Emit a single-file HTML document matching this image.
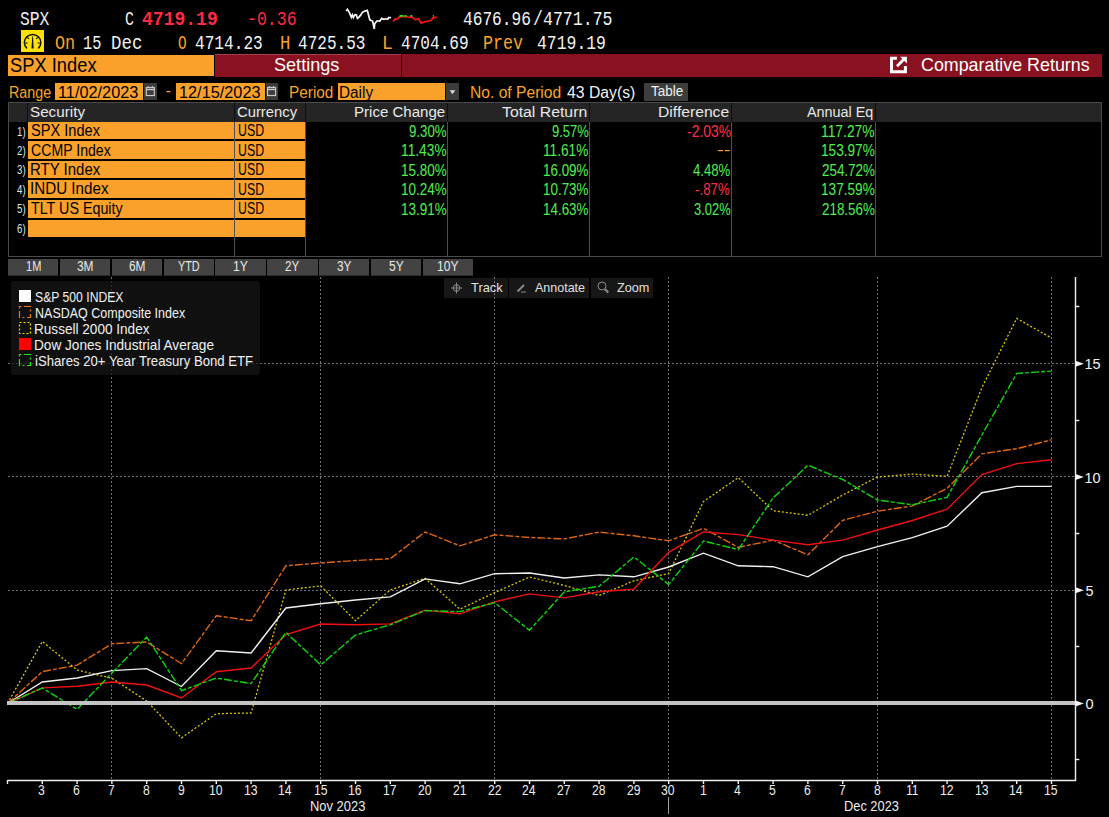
<!DOCTYPE html>
<html><head><meta charset="utf-8"><style>
*{margin:0;padding:0;box-sizing:border-box}
html,body{width:1109px;height:817px;background:#000;overflow:hidden}
body{position:relative;font-family:'Liberation Sans',sans-serif}
.t{position:absolute;line-height:1;white-space:pre}
.b{position:absolute}
.ch{position:absolute;left:0;top:0}
</style></head><body>
<div class="b" style="left:21.00px;top:30.00px;width:23.00px;height:22.00px;background:#ffe100;"></div>
<svg class="ch" width="60" height="60"><path d="M26.8,48.4 A8.2,8.2 0 1 1 38.4,48.4" fill="none" stroke="#111" stroke-width="1.5"/><g stroke="#111" stroke-width="1.1"><line x1="25.5" y1="43" x2="27.6" y2="43"/><line x1="37.6" y1="43" x2="39.7" y2="43"/><line x1="27.3" y1="37.3" x2="28.9" y2="38.9"/><line x1="37.9" y1="37.3" x2="36.3" y2="38.9"/></g><polygon points="32.2,36.4 33,36.4 33.7,48.4 31.5,48.4" fill="#111"/></svg>
<div class="b" style="left:8.00px;top:55.00px;width:205.50px;height:21.00px;background:#f9a12b;"></div>
<div class="b" style="left:215.00px;top:54.00px;width:185.50px;height:23.00px;background:#8a1120;border-top:1px solid #a3404f;"></div>
<div class="b" style="left:402.00px;top:54.00px;width:699.70px;height:23.00px;background:#8a1120;"></div>
<svg class="ch" width="1109" height="100"><path d="M896.9,58.3 H891.5 V71.7 H905.4 V66" fill="none" stroke="#fff" stroke-width="3"/><polygon points="900.2,56.8 906.9,56.8 906.9,63.5" fill="#fff"/><line x1="897" y1="66.2" x2="904.6" y2="58.6" stroke="#fff" stroke-width="2.8"/></svg>
<div class="b" style="left:54.60px;top:83.00px;width:88.30px;height:17.00px;background:#f9a12b;"></div>
<div class="b" style="left:143.90px;top:83.00px;width:12.90px;height:17.00px;background:#3b3b3b;"></div>
<div class="b" style="left:176.00px;top:83.00px;width:88.50px;height:17.00px;background:#f9a12b;"></div>
<div class="b" style="left:265.50px;top:83.00px;width:12.30px;height:17.00px;background:#3b3b3b;"></div>
<div class="b" style="left:337.70px;top:83.00px;width:107.40px;height:17.00px;background:#f9a12b;"></div>
<div class="b" style="left:446.00px;top:83.00px;width:12.80px;height:17.00px;background:#3b3b3b;"></div>
<div class="b" style="left:643.60px;top:83.00px;width:44.10px;height:17.50px;background:#3d3d3d;"></div>
<svg class="ch" width="1109" height="110"><rect x="146.3" y="87.5" width="8" height="8" fill="none" stroke="#c8c8c8" stroke-width="1.2"/><line x1="146.3" y1="89.5" x2="154.3" y2="89.5" stroke="#c8c8c8" stroke-width="1.4"/><line x1="148.3" y1="86" x2="148.3" y2="88" stroke="#c8c8c8" stroke-width="1"/><line x1="152.3" y1="86" x2="152.3" y2="88" stroke="#c8c8c8" stroke-width="1"/><rect x="267.6" y="87.5" width="8" height="8" fill="none" stroke="#c8c8c8" stroke-width="1.2"/><line x1="267.6" y1="89.5" x2="275.6" y2="89.5" stroke="#c8c8c8" stroke-width="1.4"/><line x1="269.6" y1="86" x2="269.6" y2="88" stroke="#c8c8c8" stroke-width="1"/><line x1="273.6" y1="86" x2="273.6" y2="88" stroke="#c8c8c8" stroke-width="1"/><polygon points="449.7,90.2 455.3,90.2 452.5,94.2" fill="#d8d8d8"/></svg>
<div class="b" style="left:7.50px;top:102.00px;width:1094.50px;height:155.00px;background:#000;border:1px solid #4a4a4a;"></div>
<div class="b" style="left:8.50px;top:103.00px;width:1092.50px;height:18.50px;background:#252525;"></div>
<div class="b" style="left:28.00px;top:121.80px;width:206.00px;height:17.60px;background:#f9a12b;"></div>
<div class="b" style="left:235.00px;top:121.80px;width:70.00px;height:17.60px;background:#f9a12b;"></div>
<div class="b" style="left:28.00px;top:141.35px;width:206.00px;height:17.60px;background:#f9a12b;"></div>
<div class="b" style="left:235.00px;top:141.35px;width:70.00px;height:17.60px;background:#f9a12b;"></div>
<div class="b" style="left:28.00px;top:160.90px;width:206.00px;height:17.60px;background:#f9a12b;"></div>
<div class="b" style="left:235.00px;top:160.90px;width:70.00px;height:17.60px;background:#f9a12b;"></div>
<div class="b" style="left:28.00px;top:180.45px;width:206.00px;height:17.60px;background:#f9a12b;"></div>
<div class="b" style="left:235.00px;top:180.45px;width:70.00px;height:17.60px;background:#f9a12b;"></div>
<div class="b" style="left:28.00px;top:200.00px;width:206.00px;height:17.60px;background:#f9a12b;"></div>
<div class="b" style="left:235.00px;top:200.00px;width:70.00px;height:17.60px;background:#f9a12b;"></div>
<div class="b" style="left:28.00px;top:219.55px;width:206.00px;height:17.60px;background:#f9a12b;"></div>
<div class="b" style="left:235.00px;top:219.55px;width:70.00px;height:17.60px;background:#f9a12b;"></div>
<div class="b" style="left:234.00px;top:122.00px;width:1.00px;height:135.00px;background:#505050;"></div>
<div class="b" style="left:234.00px;top:103.00px;width:1.00px;height:19.00px;background:#0e0e0e;"></div>
<div class="b" style="left:305.00px;top:122.00px;width:1.00px;height:135.00px;background:#505050;"></div>
<div class="b" style="left:305.00px;top:103.00px;width:1.00px;height:19.00px;background:#0e0e0e;"></div>
<div class="b" style="left:447.00px;top:122.00px;width:1.00px;height:135.00px;background:#505050;"></div>
<div class="b" style="left:447.00px;top:103.00px;width:1.00px;height:19.00px;background:#0e0e0e;"></div>
<div class="b" style="left:589.00px;top:122.00px;width:1.00px;height:135.00px;background:#505050;"></div>
<div class="b" style="left:589.00px;top:103.00px;width:1.00px;height:19.00px;background:#0e0e0e;"></div>
<div class="b" style="left:731.00px;top:122.00px;width:1.00px;height:135.00px;background:#505050;"></div>
<div class="b" style="left:731.00px;top:103.00px;width:1.00px;height:19.00px;background:#0e0e0e;"></div>
<div class="b" style="left:875.00px;top:122.00px;width:1.00px;height:135.00px;background:#505050;"></div>
<div class="b" style="left:875.00px;top:103.00px;width:1.00px;height:19.00px;background:#0e0e0e;"></div>
<div class="b" style="left:27.00px;top:103.00px;width:1.00px;height:19.00px;background:#0e0e0e;"></div>
<div class="b" style="left:8.00px;top:258.80px;width:50.30px;height:17.00px;background:#434343;border-bottom:1px solid #2c2c2c;"></div>
<div class="b" style="left:59.85px;top:258.80px;width:50.30px;height:17.00px;background:#434343;border-bottom:1px solid #2c2c2c;"></div>
<div class="b" style="left:111.70px;top:258.80px;width:50.30px;height:17.00px;background:#434343;border-bottom:1px solid #2c2c2c;"></div>
<div class="b" style="left:163.55px;top:258.80px;width:50.30px;height:17.00px;background:#434343;border-bottom:1px solid #2c2c2c;"></div>
<div class="b" style="left:215.40px;top:258.80px;width:50.30px;height:17.00px;background:#434343;border-bottom:1px solid #2c2c2c;"></div>
<div class="b" style="left:267.25px;top:258.80px;width:50.30px;height:17.00px;background:#434343;border-bottom:1px solid #2c2c2c;"></div>
<div class="b" style="left:319.10px;top:258.80px;width:50.30px;height:17.00px;background:#434343;border-bottom:1px solid #2c2c2c;"></div>
<div class="b" style="left:370.95px;top:258.80px;width:50.30px;height:17.00px;background:#434343;border-bottom:1px solid #2c2c2c;"></div>
<div class="b" style="left:422.80px;top:258.80px;width:50.30px;height:17.00px;background:#434343;border-bottom:1px solid #2c2c2c;"></div>
<div class="b" style="left:444.00px;top:278.00px;width:63.50px;height:20.00px;background:#171717;"></div>
<div class="b" style="left:509.00px;top:278.00px;width:79.80px;height:20.00px;background:#171717;"></div>
<div class="b" style="left:590.80px;top:278.00px;width:62.50px;height:20.00px;background:#171717;"></div>
<svg class="ch" width="1109" height="300"><g stroke="#8a8a8a" stroke-width="1" fill="none"><circle cx="456.5" cy="288" r="3.3"/><line x1="451" y1="288" x2="462" y2="288"/><line x1="456.5" y1="282.5" x2="456.5" y2="293.5"/><line x1="517.5" y1="291.5" x2="524" y2="285" stroke-width="2"/><line x1="521" y1="292" x2="526" y2="292"/><circle cx="602" cy="286" r="4"/><line x1="605" y1="289.2" x2="608.3" y2="292.5" stroke-width="2.2"/></g></svg>
<svg class="ch" width="1109" height="60"><polyline points="346.2,11.1 347.4,9.4 348.9,11.9 349.9,13.9 351.4,17.4 352.4,14.9 353.4,17.4 354.9,14.7 356.4,14.9 357.4,18.4 358.8,17.4 360.8,14.9 362.3,12.4 364.8,11.1 367.3,10.4 369.8,19.8 372.7,21.3 374.2,28.8 374.7,23.8 376.7,21.3 377.7,20.8 379.7,21.3 381.7,18.4 383.7,19.3 385.6,18.8 387.6,19.3 388.6,17.7 391.1,17.7" fill="none" stroke="#f4f4f4" stroke-width="1.7"/><polyline points="393.1,21.3 395.6,18.8 397.0,19.3 399.5,16.9 404.5,16.4 409.4,17.4 412.4,17.1 415.4,19.8 418.4,18.8 421.3,23.3 424.3,21.8 427.3,21.3 431.3,20.3 432.8,17.9 434.2,17.4 436.7,17.4" fill="none" stroke="#ff1010" stroke-width="1.7"/><line x1="399.5" y1="15.9" x2="403.5" y2="15.9" stroke="#20e020" stroke-width="1.8"/><line x1="404.5" y1="15.9" x2="406.5" y2="15.9" stroke="#20e020" stroke-width="1.8"/><line x1="410.4" y1="15.9" x2="412.4" y2="15.9" stroke="#20e020" stroke-width="1.8"/><line x1="432.8" y1="15.9" x2="433.8" y2="15.9" stroke="#20e020" stroke-width="1.8"/></svg>
<svg class="ch" width="1109" height="817" viewBox="0 0 1109 817">
<g stroke="#707070" stroke-width="1" stroke-dasharray="2 2" fill="none"><line x1="111.5" y1="277" x2="111.5" y2="780"/><line x1="320.5" y1="277" x2="320.5" y2="780"/><line x1="494.5" y1="277" x2="494.5" y2="780"/><line x1="668.5" y1="277" x2="668.5" y2="780"/><line x1="877.5" y1="277" x2="877.5" y2="780"/><line x1="1051.5" y1="277" x2="1051.5" y2="780"/><line x1="8" y1="363.5" x2="1075" y2="363.5"/><line x1="8" y1="476.5" x2="1075" y2="476.5"/><line x1="8" y1="590.5" x2="1075" y2="590.5"/></g>
<polyline points="7.5,703.5 42.3,671.6 77.1,665.2 111.9,643.7 146.7,642.0 181.5,663.6 216.3,615.7 251.1,620.8 285.9,565.7 320.7,563.0 355.5,560.5 390.3,558.7 425.1,532.0 459.9,545.8 494.7,534.8 529.5,537.5 564.3,538.9 599.1,532.1 633.9,535.8 668.7,540.8 703.5,528.3 738.3,547.4 773.1,540.1 807.9,554.8 842.7,520.3 877.5,511.2 912.3,505.9 947.1,488.3 981.9,453.8 1016.7,448.7 1051.5,439.8" fill="none" stroke="#e2670e" stroke-width="1.4" stroke-dasharray="8 2 4 2"/>
<polyline points="7.5,703.5 42.3,641.5 77.1,670.0 111.9,678.3 146.7,701.0 181.5,737.8 216.3,713.7 251.1,713.0 285.9,590.0 320.7,585.9 355.5,620.7 390.3,589.9 425.1,578.3 459.9,609.2 494.7,592.6 529.5,577.0 564.3,585.4 599.1,595.5 633.9,580.8 668.7,573.5 703.5,501.5 738.3,477.6 773.1,510.7 807.9,515.3 842.7,495.1 877.5,477.0 912.3,474.1 947.1,476.3 981.9,387.5 1016.7,318.4 1051.5,338.0" fill="none" stroke="#dcc800" stroke-width="1.3" stroke-dasharray="2 2"/>
<polyline points="7.5,703.5 42.3,682.0 77.1,678.0 111.9,670.6 146.7,668.6 181.5,686.5 216.3,650.7 251.1,653.0 285.9,608.0 320.7,603.7 355.5,600.0 390.3,596.9 425.1,578.9 459.9,583.8 494.7,573.7 529.5,573.0 564.3,578.0 599.1,574.9 633.9,576.8 668.7,567.0 703.5,553.2 738.3,565.8 773.1,566.7 807.9,576.8 842.7,556.6 877.5,546.6 912.3,537.6 947.1,526.2 981.9,492.7 1016.7,486.4 1051.5,486.4" fill="none" stroke="#f0f0f0" stroke-width="1.4"/>
<polyline points="7.5,703.5 42.3,687.9 77.1,686.2 111.9,682.0 146.7,685.0 181.5,698.0 216.3,671.7 251.1,668.0 285.9,634.6 320.7,624.0 355.5,624.8 390.3,623.9 425.1,610.1 459.9,613.8 494.7,601.8 529.5,593.9 564.3,597.9 599.1,591.8 633.9,589.1 668.7,552.3 703.5,532.0 738.3,534.6 773.1,540.1 807.9,544.7 842.7,540.1 877.5,530.0 912.3,520.5 947.1,509.2 981.9,474.6 1016.7,463.6 1051.5,459.8" fill="none" stroke="#f01010" stroke-width="1.4"/>
<polyline points="7.5,703.5 42.3,688.0 77.1,709.4 111.9,673.0 146.7,637.0 181.5,690.6 216.3,678.1 251.1,683.6 285.9,632.4 320.7,664.9 355.5,635.0 390.3,624.8 425.1,610.6 459.9,611.6 494.7,602.7 529.5,630.3 564.3,591.8 599.1,586.3 633.9,556.9 668.7,584.5 703.5,541.0 738.3,549.6 773.1,497.9 807.9,465.2 842.7,479.5 877.5,500.0 912.3,504.8 947.1,497.4 981.9,435.0 1016.7,373.4 1051.5,371.1" fill="none" stroke="#0ad80a" stroke-width="1.4" stroke-dasharray="8 2 4 2"/>
<rect x="7" y="701" width="1069" height="4" fill="#c4c4c4"/>
<g stroke="#f0f0f0" stroke-width="1.4" fill="none">
<line x1="1075.5" y1="277" x2="1075.5" y2="781"/>
<line x1="7.5" y1="780.5" x2="1076" y2="780.5"/>
<line x1="7.5" y1="780" x2="7.5" y2="784"/>
<line x1="42.3" y1="780" x2="42.3" y2="784"/>
<line x1="77.1" y1="780" x2="77.1" y2="784"/>
<line x1="111.9" y1="780" x2="111.9" y2="784"/>
<line x1="146.7" y1="780" x2="146.7" y2="784"/>
<line x1="181.5" y1="780" x2="181.5" y2="784"/>
<line x1="216.3" y1="780" x2="216.3" y2="784"/>
<line x1="251.1" y1="780" x2="251.1" y2="784"/>
<line x1="285.9" y1="780" x2="285.9" y2="784"/>
<line x1="320.7" y1="780" x2="320.7" y2="784"/>
<line x1="355.5" y1="780" x2="355.5" y2="784"/>
<line x1="390.3" y1="780" x2="390.3" y2="784"/>
<line x1="425.1" y1="780" x2="425.1" y2="784"/>
<line x1="459.9" y1="780" x2="459.9" y2="784"/>
<line x1="494.7" y1="780" x2="494.7" y2="784"/>
<line x1="529.5" y1="780" x2="529.5" y2="784"/>
<line x1="564.3" y1="780" x2="564.3" y2="784"/>
<line x1="599.1" y1="780" x2="599.1" y2="784"/>
<line x1="633.9" y1="780" x2="633.9" y2="784"/>
<line x1="668.7" y1="780" x2="668.7" y2="784"/>
<line x1="703.5" y1="780" x2="703.5" y2="784"/>
<line x1="738.3" y1="780" x2="738.3" y2="784"/>
<line x1="773.1" y1="780" x2="773.1" y2="784"/>
<line x1="807.9" y1="780" x2="807.9" y2="784"/>
<line x1="842.7" y1="780" x2="842.7" y2="784"/>
<line x1="877.5" y1="780" x2="877.5" y2="784"/>
<line x1="912.3" y1="780" x2="912.3" y2="784"/>
<line x1="947.1" y1="780" x2="947.1" y2="784"/>
<line x1="981.9" y1="780" x2="981.9" y2="784"/>
<line x1="1016.7" y1="780" x2="1016.7" y2="784"/>
<line x1="1051.5" y1="780" x2="1051.5" y2="784"/>
<line x1="1075.5" y1="306.5" x2="1079.3" y2="306.5"/>
<line x1="1075.5" y1="420.5" x2="1079.3" y2="420.5"/>
<line x1="1075.5" y1="533.5" x2="1079.3" y2="533.5"/>
<line x1="1075.5" y1="646.5" x2="1079.3" y2="646.5"/>
<line x1="1075.5" y1="759.5" x2="1079.3" y2="759.5"/>
</g>
<polygon points="1075.5,360.8 1083.8,363.8 1075.5,366.8" fill="#f4f4f4"/>
<polygon points="1075.5,474.1 1083.8,477.1 1075.5,480.1" fill="#f4f4f4"/>
<polygon points="1075.5,587.3 1083.8,590.3 1075.5,593.3" fill="#f4f4f4"/>
<polygon points="1075.5,700.5 1083.8,703.5 1075.5,706.5" fill="#f4f4f4"/>
<line x1="668.5" y1="797" x2="668.5" y2="814" stroke="#a0a0a0" stroke-width="1"/>
</svg>
<div class="b" style="left:11.30px;top:280.80px;width:248.40px;height:93.80px;background:rgba(22,22,22,0.72);border-radius:3px;"></div>
<svg class="ch" width="300" height="400"><rect x="19" y="290" width="12" height="12" fill="#fff"/><rect x="19.5" y="306.5" width="11" height="11" fill="none" stroke="#f07418" stroke-width="1.2" stroke-dasharray="2 2.5 7 2.5"/><rect x="19.5" y="322.5" width="11" height="11" fill="none" stroke="#f0e000" stroke-width="1.2" stroke-dasharray="2 2"/><rect x="19" y="338" width="12" height="12" fill="#ff0000"/><rect x="19.5" y="354.5" width="11" height="11" fill="none" stroke="#10f010" stroke-width="1.2" stroke-dasharray="2 2.5 7 2.5"/></svg>
<div class="t" style="left:20.10px;top:10.30px;font-family:'Liberation Mono', monospace;font-size:20.3px;color:#f2f2f2;transform:scaleX(0.8029);transform-origin:0 0;">SPX</div>
<div class="t" style="left:125.16px;top:10.30px;font-family:'Liberation Mono', monospace;font-size:20.3px;color:#f2f2f2;transform:scaleX(0.7364);transform-origin:0 0;">C</div>
<div class="t" style="left:142.30px;top:10.30px;font-family:'Liberation Mono', monospace;font-size:20.3px;color:#ff2a44;font-weight:bold;transform:scaleX(0.8893);transform-origin:0 0;">4719.19</div>
<div class="t" style="left:246.55px;top:10.30px;font-family:'Liberation Mono', monospace;font-size:20.3px;color:#ff2a44;transform:scaleX(0.8158);transform-origin:0 0;">-0.36</div>
<div class="t" style="left:463.40px;top:10.30px;font-family:'Liberation Mono', monospace;font-size:20.3px;color:#f2f2f2;transform:scaleX(0.7976);transform-origin:0 0;">4676.96</div>
<div class="t" style="left:533.18px;top:10.30px;font-family:'Liberation Mono', monospace;font-size:20.3px;color:#f2f2f2;transform:scaleX(0.8167);transform-origin:0 0;">/4771.75</div>
<div class="t" style="left:54.50px;top:33.50px;font-family:'Liberation Mono', monospace;font-size:20.3px;color:#fca32a;transform:scaleX(0.8304);transform-origin:0 0;">On</div>
<div class="t" style="left:82.95px;top:33.50px;font-family:'Liberation Mono', monospace;font-size:20.3px;color:#f2f2f2;transform:scaleX(0.7522);transform-origin:0 0;">15</div>
<div class="t" style="left:110.64px;top:33.50px;font-family:'Liberation Mono', monospace;font-size:20.3px;color:#f2f2f2;transform:scaleX(0.8588);transform-origin:0 0;">Dec</div>
<div class="t" style="left:177.50px;top:33.50px;font-family:'Liberation Mono', monospace;font-size:20.3px;color:#fca32a;transform:scaleX(0.7083);transform-origin:0 0;">O</div>
<div class="t" style="left:195.00px;top:33.50px;font-family:'Liberation Mono', monospace;font-size:20.3px;color:#f2f2f2;transform:scaleX(0.7952);transform-origin:0 0;">4714.23</div>
<div class="t" style="left:279.75px;top:33.50px;font-family:'Liberation Mono', monospace;font-size:20.3px;color:#fca32a;transform:scaleX(0.8500);transform-origin:0 0;">H</div>
<div class="t" style="left:297.50px;top:33.50px;font-family:'Liberation Mono', monospace;font-size:20.3px;color:#f2f2f2;transform:scaleX(0.7917);transform-origin:0 0;">4725.53</div>
<div class="t" style="left:381.84px;top:33.50px;font-family:'Liberation Mono', monospace;font-size:20.3px;color:#fca32a;transform:scaleX(0.8778);transform-origin:0 0;">L</div>
<div class="t" style="left:400.60px;top:33.50px;font-family:'Liberation Mono', monospace;font-size:20.3px;color:#f2f2f2;transform:scaleX(0.7940);transform-origin:0 0;">4704.69</div>
<div class="t" style="left:483.48px;top:33.50px;font-family:'Liberation Mono', monospace;font-size:20.3px;color:#fca32a;transform:scaleX(0.8234);transform-origin:0 0;">Prev</div>
<div class="t" style="left:536.60px;top:33.50px;font-family:'Liberation Mono', monospace;font-size:20.3px;color:#f2f2f2;transform:scaleX(0.8095);transform-origin:0 0;">4719.19</div>
<div class="t" style="left:10.46px;top:56.10px;font-family:'Liberation Sans', sans-serif;font-size:19.5px;color:#000;transform:scaleX(0.9396);transform-origin:0 0;">SPX Index</div>
<div class="t" style="left:274.42px;top:56.00px;font-family:'Liberation Sans', sans-serif;font-size:18.5px;color:#fff;transform:scaleX(0.9773);transform-origin:0 0;">Settings</div>
<div class="t" style="left:920.60px;top:56.20px;font-family:'Liberation Sans', sans-serif;font-size:18.5px;color:#fff;transform:scaleX(0.9646);transform-origin:0 0;">Comparative Returns</div>
<div class="t" style="left:8.78px;top:85.30px;font-family:'Liberation Sans', sans-serif;font-size:15.6px;color:#fca32a;transform:scaleX(0.9156);transform-origin:0 0;">Range</div>
<div class="t" style="left:58.46px;top:85.30px;font-family:'Liberation Sans', sans-serif;font-size:15.6px;color:#000;transform:scaleX(1.0447);transform-origin:0 0;">11/02/2023</div>
<div class="t" style="left:165.70px;top:83.00px;font-family:'Liberation Sans', sans-serif;font-size:15.6px;color:#fca32a;">-</div>
<div class="t" style="left:178.56px;top:85.30px;font-family:'Liberation Sans', sans-serif;font-size:15.6px;color:#000;transform:scaleX(1.0442);transform-origin:0 0;">12/15/2023</div>
<div class="t" style="left:288.72px;top:85.30px;font-family:'Liberation Sans', sans-serif;font-size:15.6px;color:#fca32a;transform:scaleX(0.9841);transform-origin:0 0;">Period</div>
<div class="t" style="left:339.32px;top:85.30px;font-family:'Liberation Sans', sans-serif;font-size:15.6px;color:#000;transform:scaleX(0.9824);transform-origin:0 0;">Daily</div>
<div class="t" style="left:469.50px;top:85.30px;font-family:'Liberation Sans', sans-serif;font-size:15.6px;color:#fca32a;transform:scaleX(1.0022);transform-origin:0 0;">No. of Period</div>
<div class="t" style="left:566.50px;top:85.30px;font-family:'Liberation Sans', sans-serif;font-size:15.6px;color:#f2f2f2;transform:scaleX(1.0104);transform-origin:0 0;">43 Day(s)</div>
<div class="t" style="left:650.50px;top:83.30px;font-family:'Liberation Sans', sans-serif;font-size:15.3px;color:#f2f2f2;transform:scaleX(0.8806);transform-origin:0 0;">Table</div>
<div class="t" style="left:30.30px;top:103.60px;font-family:'Liberation Sans', sans-serif;font-size:15.4px;color:#e8e8e8;transform:scaleX(0.9893);transform-origin:0 0;">Security</div>
<div class="t" style="left:237.00px;top:103.60px;font-family:'Liberation Sans', sans-serif;font-size:15.4px;color:#e8e8e8;transform:scaleX(0.9619);transform-origin:0 0;">Currency</div>
<div class="t" style="left:354.02px;top:103.60px;font-family:'Liberation Sans', sans-serif;font-size:15.4px;color:#e8e8e8;transform:scaleX(0.9783);transform-origin:0 0;">Price Change</div>
<div class="t" style="left:502.20px;top:103.60px;font-family:'Liberation Sans', sans-serif;font-size:15.4px;color:#e8e8e8;transform:scaleX(1.0265);transform-origin:0 0;">Total Return</div>
<div class="t" style="left:657.58px;top:103.60px;font-family:'Liberation Sans', sans-serif;font-size:15.4px;color:#e8e8e8;transform:scaleX(1.0188);transform-origin:0 0;">Difference</div>
<div class="t" style="left:807.20px;top:103.60px;font-family:'Liberation Sans', sans-serif;font-size:15.4px;color:#e8e8e8;transform:scaleX(0.9338);transform-origin:0 0;">Annual Eq</div>
<div class="t" style="left:31.40px;top:123.20px;font-family:'Liberation Sans', sans-serif;font-size:15.8px;color:#000;transform:scaleX(0.9240);transform-origin:0 0;">SPX Index</div>
<div class="t" style="left:237.63px;top:123.40px;font-family:'Liberation Sans', sans-serif;font-size:16px;color:#000;transform:scaleX(0.7727);transform-origin:0 0;">USD</div>
<div class="t" style="left:408.80px;top:124.00px;font-family:'Liberation Sans', sans-serif;font-size:15.9px;color:#4ff04f;transform:scaleX(0.8356);transform-origin:0 0;">9.30%</div>
<div class="t" style="left:551.60px;top:124.00px;font-family:'Liberation Sans', sans-serif;font-size:15.9px;color:#4ff04f;transform:scaleX(0.8200);transform-origin:0 0;">9.57%</div>
<div class="t" style="left:686.60px;top:124.00px;font-family:'Liberation Sans', sans-serif;font-size:15.9px;color:#ff3045;transform:scaleX(0.8760);transform-origin:0 0;">-2.03%</div>
<div class="t" style="left:820.73px;top:124.00px;font-family:'Liberation Sans', sans-serif;font-size:15.9px;color:#4ff04f;transform:scaleX(0.8705);transform-origin:0 0;">117.27%</div>
<div class="t" style="left:31.40px;top:142.60px;font-family:'Liberation Sans', sans-serif;font-size:15.8px;color:#000;transform:scaleX(0.8933);transform-origin:0 0;">CCMP Index</div>
<div class="t" style="left:237.63px;top:142.80px;font-family:'Liberation Sans', sans-serif;font-size:16px;color:#000;transform:scaleX(0.7727);transform-origin:0 0;">USD</div>
<div class="t" style="left:400.53px;top:143.40px;font-family:'Liberation Sans', sans-serif;font-size:15.9px;color:#4ff04f;transform:scaleX(0.8654);transform-origin:0 0;">11.43%</div>
<div class="t" style="left:542.94px;top:143.40px;font-family:'Liberation Sans', sans-serif;font-size:15.9px;color:#4ff04f;transform:scaleX(0.8596);transform-origin:0 0;">11.61%</div>
<div class="t" style="left:716.80px;top:141.90px;font-family:'Liberation Sans', sans-serif;font-size:15.5px;color:#fca32a;transform:scaleX(1.3000);transform-origin:0 0;">--</div>
<div class="t" style="left:820.74px;top:143.40px;font-family:'Liberation Sans', sans-serif;font-size:15.9px;color:#4ff04f;transform:scaleX(0.8565);transform-origin:0 0;">153.97%</div>
<div class="t" style="left:30.45px;top:162.00px;font-family:'Liberation Sans', sans-serif;font-size:15.8px;color:#000;transform:scaleX(0.9479);transform-origin:0 0;">RTY Index</div>
<div class="t" style="left:237.63px;top:162.20px;font-family:'Liberation Sans', sans-serif;font-size:16px;color:#000;transform:scaleX(0.7727);transform-origin:0 0;">USD</div>
<div class="t" style="left:400.55px;top:162.80px;font-family:'Liberation Sans', sans-serif;font-size:15.9px;color:#4ff04f;transform:scaleX(0.8491);transform-origin:0 0;">15.80%</div>
<div class="t" style="left:542.96px;top:162.80px;font-family:'Liberation Sans', sans-serif;font-size:15.9px;color:#4ff04f;transform:scaleX(0.8434);transform-origin:0 0;">16.09%</div>
<div class="t" style="left:693.20px;top:162.80px;font-family:'Liberation Sans', sans-serif;font-size:15.9px;color:#4ff04f;transform:scaleX(0.8267);transform-origin:0 0;">4.48%</div>
<div class="t" style="left:821.60px;top:162.80px;font-family:'Liberation Sans', sans-serif;font-size:15.9px;color:#4ff04f;transform:scaleX(0.8429);transform-origin:0 0;">254.72%</div>
<div class="t" style="left:30.44px;top:181.40px;font-family:'Liberation Sans', sans-serif;font-size:15.8px;color:#000;transform:scaleX(0.9617);transform-origin:0 0;">INDU Index</div>
<div class="t" style="left:237.63px;top:181.60px;font-family:'Liberation Sans', sans-serif;font-size:16px;color:#000;transform:scaleX(0.7727);transform-origin:0 0;">USD</div>
<div class="t" style="left:400.55px;top:182.20px;font-family:'Liberation Sans', sans-serif;font-size:15.9px;color:#4ff04f;transform:scaleX(0.8491);transform-origin:0 0;">10.24%</div>
<div class="t" style="left:542.96px;top:182.20px;font-family:'Liberation Sans', sans-serif;font-size:15.9px;color:#4ff04f;transform:scaleX(0.8434);transform-origin:0 0;">10.73%</div>
<div class="t" style="left:695.20px;top:182.20px;font-family:'Liberation Sans', sans-serif;font-size:15.9px;color:#ff3045;transform:scaleX(0.8381);transform-origin:0 0;">-.87%</div>
<div class="t" style="left:820.74px;top:182.20px;font-family:'Liberation Sans', sans-serif;font-size:15.9px;color:#4ff04f;transform:scaleX(0.8565);transform-origin:0 0;">137.59%</div>
<div class="t" style="left:31.40px;top:200.80px;font-family:'Liberation Sans', sans-serif;font-size:15.8px;color:#000;transform:scaleX(0.9049);transform-origin:0 0;">TLT US Equity</div>
<div class="t" style="left:237.63px;top:201.00px;font-family:'Liberation Sans', sans-serif;font-size:16px;color:#000;transform:scaleX(0.7727);transform-origin:0 0;">USD</div>
<div class="t" style="left:400.55px;top:201.60px;font-family:'Liberation Sans', sans-serif;font-size:15.9px;color:#4ff04f;transform:scaleX(0.8491);transform-origin:0 0;">13.91%</div>
<div class="t" style="left:542.96px;top:201.60px;font-family:'Liberation Sans', sans-serif;font-size:15.9px;color:#4ff04f;transform:scaleX(0.8434);transform-origin:0 0;">14.63%</div>
<div class="t" style="left:693.80px;top:201.60px;font-family:'Liberation Sans', sans-serif;font-size:15.9px;color:#4ff04f;transform:scaleX(0.8133);transform-origin:0 0;">3.02%</div>
<div class="t" style="left:821.60px;top:201.60px;font-family:'Liberation Sans', sans-serif;font-size:15.9px;color:#4ff04f;transform:scaleX(0.8429);transform-origin:0 0;">218.56%</div>
<div class="t" style="left:16.90px;top:124.60px;font-family:'Liberation Sans', sans-serif;font-size:13.2px;color:#d8e4f0;transform:scaleX(0.7364);transform-origin:0 0;">1)</div>
<div class="t" style="left:16.90px;top:144.00px;font-family:'Liberation Sans', sans-serif;font-size:13.2px;color:#d8e4f0;transform:scaleX(0.7364);transform-origin:0 0;">2)</div>
<div class="t" style="left:16.90px;top:163.40px;font-family:'Liberation Sans', sans-serif;font-size:13.2px;color:#d8e4f0;transform:scaleX(0.7364);transform-origin:0 0;">3)</div>
<div class="t" style="left:16.90px;top:182.80px;font-family:'Liberation Sans', sans-serif;font-size:13.2px;color:#d8e4f0;transform:scaleX(0.7364);transform-origin:0 0;">4)</div>
<div class="t" style="left:16.90px;top:202.20px;font-family:'Liberation Sans', sans-serif;font-size:13.2px;color:#d8e4f0;transform:scaleX(0.7364);transform-origin:0 0;">5)</div>
<div class="t" style="left:16.90px;top:221.60px;font-family:'Liberation Sans', sans-serif;font-size:13.2px;color:#d8e4f0;transform:scaleX(0.7364);transform-origin:0 0;">6)</div>
<div class="t" style="left:35.40px;top:291.30px;font-family:'Liberation Sans', sans-serif;font-size:13.9px;color:#f0f0f0;transform:scaleX(0.8772);transform-origin:0 0;">S&amp;P 500 INDEX</div>
<div class="t" style="left:34.50px;top:307.30px;font-family:'Liberation Sans', sans-serif;font-size:13.9px;color:#f0f0f0;transform:scaleX(0.9006);transform-origin:0 0;">NASDAQ Composite Index</div>
<div class="t" style="left:34.42px;top:323.30px;font-family:'Liberation Sans', sans-serif;font-size:13.9px;color:#f0f0f0;transform:scaleX(0.9778);transform-origin:0 0;">Russell 2000 Index</div>
<div class="t" style="left:34.42px;top:339.30px;font-family:'Liberation Sans', sans-serif;font-size:13.9px;color:#f0f0f0;transform:scaleX(0.9808);transform-origin:0 0;">Dow Jones Industrial Average</div>
<div class="t" style="left:35.40px;top:355.30px;font-family:'Liberation Sans', sans-serif;font-size:13.9px;color:#f0f0f0;transform:scaleX(0.9465);transform-origin:0 0;">iShares 20+ Year Treasury Bond ETF</div>
<div class="t" style="left:25.55px;top:260.30px;font-family:'Liberation Sans', sans-serif;font-size:13.8px;color:#e8e8e8;transform:scaleX(0.8000);transform-origin:0 0;">1M</div>
<div class="t" style="left:76.80px;top:260.30px;font-family:'Liberation Sans', sans-serif;font-size:13.8px;color:#e8e8e8;transform:scaleX(0.8632);transform-origin:0 0;">3M</div>
<div class="t" style="left:128.65px;top:260.30px;font-family:'Liberation Sans', sans-serif;font-size:13.8px;color:#e8e8e8;transform:scaleX(0.8632);transform-origin:0 0;">6M</div>
<div class="t" style="left:177.70px;top:260.30px;font-family:'Liberation Sans', sans-serif;font-size:13.8px;color:#e8e8e8;transform:scaleX(0.7857);transform-origin:0 0;">YTD</div>
<div class="t" style="left:233.05px;top:260.30px;font-family:'Liberation Sans', sans-serif;font-size:13.8px;color:#e8e8e8;transform:scaleX(0.8824);transform-origin:0 0;">1Y</div>
<div class="t" style="left:285.25px;top:260.30px;font-family:'Liberation Sans', sans-serif;font-size:13.8px;color:#e8e8e8;transform:scaleX(0.8412);transform-origin:0 0;">2Y</div>
<div class="t" style="left:336.95px;top:260.30px;font-family:'Liberation Sans', sans-serif;font-size:13.8px;color:#e8e8e8;transform:scaleX(0.8588);transform-origin:0 0;">3Y</div>
<div class="t" style="left:388.65px;top:260.30px;font-family:'Liberation Sans', sans-serif;font-size:13.8px;color:#e8e8e8;transform:scaleX(0.8765);transform-origin:0 0;">5Y</div>
<div class="t" style="left:437.45px;top:260.30px;font-family:'Liberation Sans', sans-serif;font-size:13.8px;color:#e8e8e8;transform:scaleX(0.8750);transform-origin:0 0;">10Y</div>
<div class="t" style="left:470.80px;top:282.00px;font-family:'Liberation Sans', sans-serif;font-size:12.8px;color:#e0e0e0;transform:scaleX(1.0063);transform-origin:0 0;">Track</div>
<div class="t" style="left:535.00px;top:282.00px;font-family:'Liberation Sans', sans-serif;font-size:12.8px;color:#e0e0e0;transform:scaleX(0.9765);transform-origin:0 0;">Annotate</div>
<div class="t" style="left:617.00px;top:282.00px;font-family:'Liberation Sans', sans-serif;font-size:12.8px;color:#e0e0e0;transform:scaleX(0.9906);transform-origin:0 0;">Zoom</div>
<div class="t" style="left:38.32px;top:783.40px;font-family:'Liberation Sans', sans-serif;font-size:14px;color:#ececec;transform:scaleX(0.8700);transform-origin:0 0;">3</div>
<div class="t" style="left:73.12px;top:783.40px;font-family:'Liberation Sans', sans-serif;font-size:14px;color:#ececec;transform:scaleX(0.8700);transform-origin:0 0;">6</div>
<div class="t" style="left:107.92px;top:783.40px;font-family:'Liberation Sans', sans-serif;font-size:14px;color:#ececec;transform:scaleX(0.8700);transform-origin:0 0;">7</div>
<div class="t" style="left:142.72px;top:783.40px;font-family:'Liberation Sans', sans-serif;font-size:14px;color:#ececec;transform:scaleX(0.8700);transform-origin:0 0;">8</div>
<div class="t" style="left:177.52px;top:783.40px;font-family:'Liberation Sans', sans-serif;font-size:14px;color:#ececec;transform:scaleX(0.8700);transform-origin:0 0;">9</div>
<div class="t" style="left:208.84px;top:783.40px;font-family:'Liberation Sans', sans-serif;font-size:14px;color:#ececec;transform:scaleX(0.8700);transform-origin:0 0;">10</div>
<div class="t" style="left:244.07px;top:783.40px;font-family:'Liberation Sans', sans-serif;font-size:14px;color:#ececec;transform:scaleX(0.8700);transform-origin:0 0;">13</div>
<div class="t" style="left:278.44px;top:783.40px;font-family:'Liberation Sans', sans-serif;font-size:14px;color:#ececec;transform:scaleX(0.8700);transform-origin:0 0;">14</div>
<div class="t" style="left:313.68px;top:783.40px;font-family:'Liberation Sans', sans-serif;font-size:14px;color:#ececec;transform:scaleX(0.8700);transform-origin:0 0;">15</div>
<div class="t" style="left:348.48px;top:783.40px;font-family:'Liberation Sans', sans-serif;font-size:14px;color:#ececec;transform:scaleX(0.8700);transform-origin:0 0;">16</div>
<div class="t" style="left:383.27px;top:783.40px;font-family:'Liberation Sans', sans-serif;font-size:14px;color:#ececec;transform:scaleX(0.8700);transform-origin:0 0;">17</div>
<div class="t" style="left:417.64px;top:783.40px;font-family:'Liberation Sans', sans-serif;font-size:14px;color:#ececec;transform:scaleX(0.8700);transform-origin:0 0;">20</div>
<div class="t" style="left:452.88px;top:783.40px;font-family:'Liberation Sans', sans-serif;font-size:14px;color:#ececec;transform:scaleX(0.8700);transform-origin:0 0;">21</div>
<div class="t" style="left:487.67px;top:783.40px;font-family:'Liberation Sans', sans-serif;font-size:14px;color:#ececec;transform:scaleX(0.8700);transform-origin:0 0;">22</div>
<div class="t" style="left:522.04px;top:783.40px;font-family:'Liberation Sans', sans-serif;font-size:14px;color:#ececec;transform:scaleX(0.8700);transform-origin:0 0;">24</div>
<div class="t" style="left:557.27px;top:783.40px;font-family:'Liberation Sans', sans-serif;font-size:14px;color:#ececec;transform:scaleX(0.8700);transform-origin:0 0;">27</div>
<div class="t" style="left:592.07px;top:783.40px;font-family:'Liberation Sans', sans-serif;font-size:14px;color:#ececec;transform:scaleX(0.8700);transform-origin:0 0;">28</div>
<div class="t" style="left:626.88px;top:783.40px;font-family:'Liberation Sans', sans-serif;font-size:14px;color:#ececec;transform:scaleX(0.8700);transform-origin:0 0;">29</div>
<div class="t" style="left:661.24px;top:783.40px;font-family:'Liberation Sans', sans-serif;font-size:14px;color:#ececec;transform:scaleX(0.8700);transform-origin:0 0;">30</div>
<div class="t" style="left:699.52px;top:783.40px;font-family:'Liberation Sans', sans-serif;font-size:14px;color:#ececec;transform:scaleX(0.8700);transform-origin:0 0;">1</div>
<div class="t" style="left:734.32px;top:783.40px;font-family:'Liberation Sans', sans-serif;font-size:14px;color:#ececec;transform:scaleX(0.8700);transform-origin:0 0;">4</div>
<div class="t" style="left:769.12px;top:783.40px;font-family:'Liberation Sans', sans-serif;font-size:14px;color:#ececec;transform:scaleX(0.8700);transform-origin:0 0;">5</div>
<div class="t" style="left:803.92px;top:783.40px;font-family:'Liberation Sans', sans-serif;font-size:14px;color:#ececec;transform:scaleX(0.8700);transform-origin:0 0;">6</div>
<div class="t" style="left:838.72px;top:783.40px;font-family:'Liberation Sans', sans-serif;font-size:14px;color:#ececec;transform:scaleX(0.8700);transform-origin:0 0;">7</div>
<div class="t" style="left:873.52px;top:783.40px;font-family:'Liberation Sans', sans-serif;font-size:14px;color:#ececec;transform:scaleX(0.8700);transform-origin:0 0;">8</div>
<div class="t" style="left:905.71px;top:783.40px;font-family:'Liberation Sans', sans-serif;font-size:14px;color:#ececec;transform:scaleX(0.8700);transform-origin:0 0;">11</div>
<div class="t" style="left:940.07px;top:783.40px;font-family:'Liberation Sans', sans-serif;font-size:14px;color:#ececec;transform:scaleX(0.8700);transform-origin:0 0;">12</div>
<div class="t" style="left:974.87px;top:783.40px;font-family:'Liberation Sans', sans-serif;font-size:14px;color:#ececec;transform:scaleX(0.8700);transform-origin:0 0;">13</div>
<div class="t" style="left:1009.24px;top:783.40px;font-family:'Liberation Sans', sans-serif;font-size:14px;color:#ececec;transform:scaleX(0.8700);transform-origin:0 0;">14</div>
<div class="t" style="left:1044.47px;top:783.40px;font-family:'Liberation Sans', sans-serif;font-size:14px;color:#ececec;transform:scaleX(0.8700);transform-origin:0 0;">15</div>
<div class="t" style="left:309.51px;top:799.20px;font-family:'Liberation Sans', sans-serif;font-size:14.6px;color:#ececec;transform:scaleX(0.8869);transform-origin:0 0;">Nov 2023</div>
<div class="t" style="left:843.72px;top:799.20px;font-family:'Liberation Sans', sans-serif;font-size:14.6px;color:#ececec;transform:scaleX(0.8787);transform-origin:0 0;">Dec 2023</div>
<div class="t" style="left:1084.50px;top:357.20px;font-family:'Liberation Sans', sans-serif;font-size:14.5px;color:#f0f0f0;">15</div>
<div class="t" style="left:1084.50px;top:470.50px;font-family:'Liberation Sans', sans-serif;font-size:14.5px;color:#f0f0f0;">10</div>
<div class="t" style="left:1085.50px;top:583.70px;font-family:'Liberation Sans', sans-serif;font-size:14.5px;color:#f0f0f0;">5</div>
<div class="t" style="left:1085.50px;top:696.90px;font-family:'Liberation Sans', sans-serif;font-size:14.5px;color:#f0f0f0;">0</div>
</body></html>
